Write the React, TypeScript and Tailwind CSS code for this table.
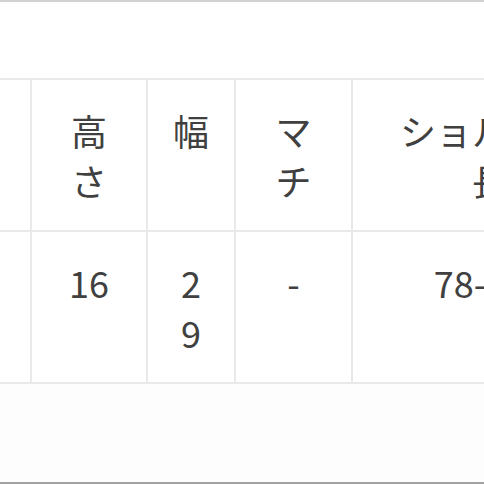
const headers = [
  { key: "label", text: [""] },
  { key: "height", text: ["高", "さ"] },
  { key: "width", text: ["幅"] },
  { key: "gusset", text: ["マ", "チ"] },
  { key: "shoulder", text: ["ショルダー", "長"] },
]

const values = [
  { key: "label", text: [""] },
  { key: "height", text: ["16"] },
  { key: "width", text: ["2", "9"] },
  { key: "gusset", text: ["-"] },
  { key: "shoulder", text: ["78-130"] },
]

function Lines({ lines }: { lines: string[] }) {
  return (
    <>
      {lines.map((line, i) => (
        <span key={i} className="block">
          {line}
        </span>
      ))}
    </>
  )
}

export default function App() {
  const cell =
    "border-2 border-[#e9e9e9] px-0 py-[25px] align-top text-center whitespace-nowrap text-[36px] leading-[50px] font-normal text-[#404040]"

  return (
    <div
      className="flex h-[484px] w-[484px] flex-col overflow-hidden border-t-2 border-b-2 border-t-[#d2d2d2] border-b-[#a3a3a3] bg-white"
      style={{ fontFamily: '"Noto Sans CJK JP", "Noto Sans", sans-serif' }}
    >
      <div className="mt-[76px] overflow-hidden">
        <table className="ml-[-100px] w-[727px] table-fixed border-collapse">
          <colgroup>
            <col className="w-[130px]" />
            <col className="w-[116px]" />
            <col className="w-[88px]" />
            <col className="w-[117px]" />
            <col className="w-[276px]" />
          </colgroup>
          <thead>
            <tr>
              {headers.map((h) => (
                <th key={h.key} className={cell}>
                  <Lines lines={h.text} />
                </th>
              ))}
            </tr>
          </thead>
          <tbody>
            <tr>
              {values.map((v) => (
                <td key={v.key} className={cell}>
                  <Lines lines={v.text} />
                </td>
              ))}
            </tr>
          </tbody>
        </table>
      </div>
      <div className="flex-1 bg-[#fdfdfd]" />
    </div>
  )
}
